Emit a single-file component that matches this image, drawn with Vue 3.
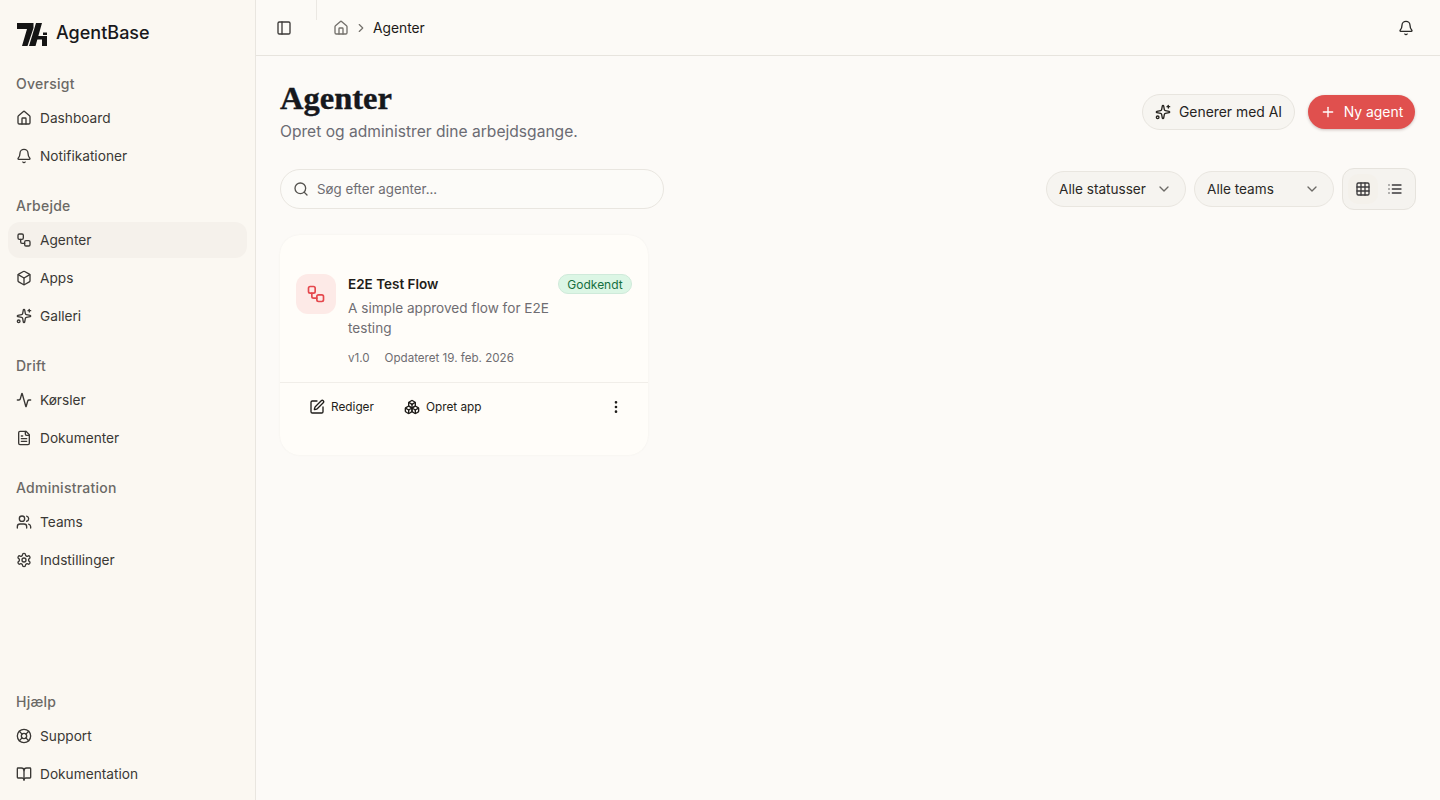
<template>
  <div class="layout">
    <aside class="sidebar">
      <div class="brand">
        <svg class="logo" viewBox="0 0 30 23" width="30" height="23">
          <path d="M0 0H16.5V5L10.5 23H5L10 6H0Z" fill="#141414" />
          <path d="M19 0H25L18.5 23H12Z" fill="#141414" />
          <path d="M16 13H30V23H25V16.5H16Z" fill="#141414" />
          <path d="M26 9.5H30V12H26Z" fill="#141414" />
        </svg>
        <span class="brand-name">AgentBase</span>
      </div>

      <nav class="nav">
        <div v-for="group in navGroups" :key="group.label" class="nav-group">
          <div class="nav-label">{{ group.label }}</div>
          <a
            v-for="item in group.items"
            :key="item.label"
            class="nav-item"
            :class="{ active: item.active }"
          >
            <svg class="icon" viewBox="0 0 24 24" v-html="icons[item.icon]"></svg>
            <span>{{ item.label }}</span>
          </a>
        </div>
      </nav>

      <div class="nav-group nav-bottom">
        <div class="nav-label">Hjælp</div>
        <a v-for="item in helpItems" :key="item.label" class="nav-item">
          <svg class="icon" viewBox="0 0 24 24" v-html="icons[item.icon]"></svg>
          <span>{{ item.label }}</span>
        </a>
      </div>
    </aside>

    <main class="main">
      <header class="topbar">
        <svg class="icon panel-icon" viewBox="0 0 24 24" v-html="icons.panel"></svg>
        <div class="topbar-sep"></div>
        <div class="crumbs">
          <svg class="icon crumb-home" viewBox="0 0 24 24" v-html="icons.house"></svg>
          <svg class="icon crumb-chev" viewBox="0 0 24 24" v-html="icons.chevronRight"></svg>
          <span class="crumb-current">Agenter</span>
        </div>
        <svg class="icon bell" viewBox="0 0 24 24" v-html="icons.bell"></svg>
      </header>

      <section class="content">
        <div class="page-head">
          <div>
            <h1>Agenter</h1>
            <p class="subtitle">Opret og administrer dine arbejdsgange.</p>
          </div>
          <div class="head-actions">
            <button class="btn-outline">
              <svg class="icon" viewBox="0 0 24 24" v-html="icons.sparkles"></svg>
              Generer med AI
            </button>
            <button class="btn-primary">
              <svg class="icon" viewBox="0 0 24 24" v-html="icons.plus"></svg>
              Ny agent
            </button>
          </div>
        </div>

        <div class="filters">
          <div class="search">
            <svg class="icon" viewBox="0 0 24 24" v-html="icons.search"></svg>
            <span>Søg efter agenter...</span>
          </div>
          <div class="filter-right">
            <div class="select">
              <span>Alle statusser</span>
              <svg class="icon chev" viewBox="0 0 24 24" v-html="icons.chevronDown"></svg>
            </div>
            <div class="select">
              <span>Alle teams</span>
              <svg class="icon chev" viewBox="0 0 24 24" v-html="icons.chevronDown"></svg>
            </div>
            <div class="view-toggle">
              <span class="view-btn on">
                <svg class="icon" viewBox="0 0 24 24" v-html="icons.grid"></svg>
              </span>
              <span class="view-btn">
                <svg class="icon" viewBox="0 0 24 24" v-html="icons.list"></svg>
              </span>
            </div>
          </div>
        </div>

        <div class="cards">
          <article class="card">
            <div class="card-body">
              <div class="card-icon">
                <svg class="icon" viewBox="0 0 24 24" v-html="icons.workflow"></svg>
              </div>
              <div class="card-text">
                <div class="card-title">
                  <span>E2E Test Flow</span>
                  <span class="badge">Godkendt</span>
                </div>
                <p class="card-desc">A simple approved flow for E2E testing</p>
                <div class="card-meta">
                  <span>v1.0</span>
                  <span>Opdateret 19. feb. 2026</span>
                </div>
              </div>
            </div>
            <div class="card-foot">
              <button class="ghost">
                <svg class="icon" viewBox="0 0 24 24" v-html="icons.pen"></svg>
                Rediger
              </button>
              <button class="ghost">
                <svg class="icon" viewBox="0 0 24 24" v-html="icons.boxes"></svg>
                Opret app
              </button>
              <button class="kebab">
                <svg class="icon" viewBox="0 0 24 24" v-html="icons.dots"></svg>
              </button>
            </div>
          </article>
        </div>
      </section>
    </main>
  </div>
</template>

<script setup>
const icons = {
  house: '<path d="M15 21v-8a1 1 0 0 0-1-1h-4a1 1 0 0 0-1 1v8"/><path d="M3 10a2 2 0 0 1 .709-1.528l7-5.999a2 2 0 0 1 2.582 0l7 5.999A2 2 0 0 1 21 10v9a2 2 0 0 1-2 2H5a2 2 0 0 1-2-2z"/>',
  bell: '<path d="M10.268 21a2 2 0 0 0 3.464 0"/><path d="M3.262 15.326A1 1 0 0 0 4 17h16a1 1 0 0 0 .74-1.673C19.41 13.956 18 12.499 18 8A6 6 0 0 0 6 8c0 4.499-1.411 5.956-2.738 7.326"/>',
  workflow: '<rect x="3" y="3" width="8" height="8" rx="2"/><path d="M7 11v4a2 2 0 0 0 2 2h4"/><rect x="13" y="13" width="8" height="8" rx="2"/>',
  box: '<path d="M21 8a2 2 0 0 0-1-1.73l-7-4a2 2 0 0 0-2 0l-7 4A2 2 0 0 0 3 8v8a2 2 0 0 0 1 1.73l7 4a2 2 0 0 0 2 0l7-4A2 2 0 0 0 21 16Z"/><path d="m3.3 7 8.7 5 8.7-5"/><path d="M12 22V12"/>',
  sparkles: '<path d="M11.017 2.814a1 1 0 0 1 1.966 0l1.051 5.558a2 2 0 0 0 1.594 1.594l5.558 1.051a1 1 0 0 1 0 1.966l-5.558 1.051a2 2 0 0 0-1.594 1.594l-1.051 5.558a1 1 0 0 1-1.966 0l-1.051-5.558a2 2 0 0 0-1.594-1.594l-5.558-1.051a1 1 0 0 1 0-1.966l5.558-1.051a2 2 0 0 0 1.594-1.594z"/><path d="M20 2v4"/><path d="M22 4h-4"/><circle cx="4" cy="20" r="2"/>',
  activity: '<path d="M22 12h-2.48a2 2 0 0 0-1.93 1.46l-2.35 8.36a.25.25 0 0 1-.48 0L9.24 2.18a.25.25 0 0 0-.48 0l-2.35 8.36A2 2 0 0 1 4.49 12H2"/>',
  file: '<path d="M15 2H6a2 2 0 0 0-2 2v16a2 2 0 0 0 2 2h12a2 2 0 0 0 2-2V7Z"/><path d="M14 2v4a2 2 0 0 0 2 2h4"/><path d="M10 9H8"/><path d="M16 13H8"/><path d="M16 17H8"/>',
  users: '<path d="M16 21v-2a4 4 0 0 0-4-4H6a4 4 0 0 0-4 4v2"/><circle cx="9" cy="7" r="4"/><path d="M22 21v-2a4 4 0 0 0-3-3.87"/><path d="M16 3.13a4 4 0 0 1 0 7.75"/>',
  settings: '<path d="M12.22 2h-.44a2 2 0 0 0-2 2v.18a2 2 0 0 1-1 1.73l-.43.25a2 2 0 0 1-2 0l-.15-.08a2 2 0 0 0-2.73.73l-.22.38a2 2 0 0 0 .73 2.73l.15.1a2 2 0 0 1 1 1.72v.51a2 2 0 0 1-1 1.74l-.15.09a2 2 0 0 0-.73 2.73l.22.38a2 2 0 0 0 2.73.73l.15-.08a2 2 0 0 1 2 0l.43.25a2 2 0 0 1 1 1.73V20a2 2 0 0 0 2 2h.44a2 2 0 0 0 2-2v-.18a2 2 0 0 1 1-1.73l.43-.25a2 2 0 0 1 2 0l.15.08a2 2 0 0 0 2.73-.73l.22-.39a2 2 0 0 0-.73-2.73l-.15-.08a2 2 0 0 1-1-1.74v-.5a2 2 0 0 1 1-1.74l.15-.09a2 2 0 0 0 .73-2.73l-.22-.38a2 2 0 0 0-2.73-.73l-.15.08a2 2 0 0 1-2 0l-.43-.25a2 2 0 0 1-1-1.73V4a2 2 0 0 0-2-2z"/><circle cx="12" cy="12" r="3"/>',
  lifebuoy: '<circle cx="12" cy="12" r="10"/><path d="m4.93 4.93 4.24 4.24"/><path d="m14.83 9.17 4.24-4.24"/><path d="m14.83 14.83 4.24 4.24"/><path d="m9.17 14.83-4.24 4.24"/><circle cx="12" cy="12" r="4"/>',
  book: '<path d="M12 7v14"/><path d="M3 18a1 1 0 0 1-1-1V4a1 1 0 0 1 1-1h5a4 4 0 0 1 4 4 4 4 0 0 1 4-4h5a1 1 0 0 1 1 1v13a1 1 0 0 1-1 1h-6a3 3 0 0 0-3 3 3 3 0 0 0-3-3z"/>',
  panel: '<rect x="3" y="3" width="18" height="18" rx="2"/><path d="M9 3v18"/>',
  chevronRight: '<path d="m9 18 6-6-6-6"/>',
  chevronDown: '<path d="m6 9 6 6 6-6"/>',
  search: '<path d="m21 21-4.34-4.34"/><circle cx="11" cy="11" r="8"/>',
  plus: '<path d="M5 12h14"/><path d="M12 5v14"/>',
  grid: '<rect x="3" y="3" width="18" height="18" rx="2"/><path d="M3 9h18"/><path d="M3 15h18"/><path d="M9 3v18"/><path d="M15 3v18"/>',
  list: '<path d="M3 12h.01"/><path d="M3 18h.01"/><path d="M3 6h.01"/><path d="M8 12h13"/><path d="M8 18h13"/><path d="M8 6h13"/>',
  pen: '<path d="M12 3H5a2 2 0 0 0-2 2v14a2 2 0 0 0 2 2h14a2 2 0 0 0 2-2v-7"/><path d="M18.375 2.625a1 1 0 0 1 3 3l-9.013 9.014a2 2 0 0 1-.853.505l-2.873.84a.5.5 0 0 1-.62-.62l.84-2.873a2 2 0 0 1 .506-.852z"/>',
  boxes: '<path d="M2.97 12.92A2 2 0 0 0 2 14.63v3.24a2 2 0 0 0 .97 1.71l3 1.8a2 2 0 0 0 2.06 0L12 19v-5.5l-5-3-4.03 2.42Z"/><path d="m7 16.5-4.74-2.85"/><path d="m7 16.5 5-3"/><path d="M7 16.5v5.17"/><path d="M12 13.5V19l3.97 2.38a2 2 0 0 0 2.06 0l3-1.8a2 2 0 0 0 .97-1.71v-3.24a2 2 0 0 0-.97-1.71L17 10.5l-5 3Z"/><path d="m17 16.5-5-3"/><path d="m17 16.5 4.74-2.85"/><path d="M17 16.5v5.17"/><path d="M7.97 4.42A2 2 0 0 0 7 6.13v4.37l5 3 5-3V6.13a2 2 0 0 0-.97-1.71l-3-1.8a2 2 0 0 0-2.06 0l-3 1.8Z"/><path d="M12 8 7.26 5.15"/><path d="m12 8 4.74-2.85"/><path d="M12 13.5V8"/>',
  dots: '<circle cx="12" cy="12" r="1"/><circle cx="12" cy="5" r="1"/><circle cx="12" cy="19" r="1"/>'
}

const navGroups = [
  {
    label: 'Oversigt',
    items: [
      { label: 'Dashboard', icon: 'house' },
      { label: 'Notifikationer', icon: 'bell' }
    ]
  },
  {
    label: 'Arbejde',
    items: [
      { label: 'Agenter', icon: 'workflow', active: true },
      { label: 'Apps', icon: 'box' },
      { label: 'Galleri', icon: 'sparkles' }
    ]
  },
  {
    label: 'Drift',
    items: [
      { label: 'Kørsler', icon: 'activity' },
      { label: 'Dokumenter', icon: 'file' }
    ]
  },
  {
    label: 'Administration',
    items: [
      { label: 'Teams', icon: 'users' },
      { label: 'Indstillinger', icon: 'settings' }
    ]
  }
]

const helpItems = [
  { label: 'Support', icon: 'lifebuoy' },
  { label: 'Dokumentation', icon: 'book' }
]
</script>

<style>
html,
body {
  margin: 0;
  background: #fcfaf7;
}
</style>

<style scoped>
.layout {
  display: flex;
  height: 800px;
  overflow: hidden;
  font-family: "Inter", "Noto Sans", sans-serif;
  color: #1c1917;
  background: #fcfaf7;
}

.icon {
  width: 16px;
  height: 16px;
  flex: none;
  fill: none;
  stroke: currentColor;
  stroke-width: 2;
  stroke-linecap: round;
  stroke-linejoin: round;
}

.sidebar {
  width: 255px;
  flex: none;
  display: flex;
  flex-direction: column;
  background: #fbf8f2;
  border-right: 1px solid #e9e6e0;
}

.brand {
  height: 64px;
  margin-bottom: 4px;
  display: flex;
  align-items: center;
  gap: 9px;
  padding: 0 17px;
}

.logo {
  flex: none;
  margin-top: 4px;
}

.brand-name {
  font-size: 18px;
  font-weight: 500;
  color: #18181b;
}

.nav {
  display: flex;
  flex-direction: column;
  gap: 16px;
}

.nav-group {
  display: flex;
  flex-direction: column;
  gap: 2px;
  padding: 0 8px;
}

.nav-bottom {
  margin-top: auto;
  padding-bottom: 8px;
}

.nav-label {
  height: 32px;
  box-sizing: border-box;
  margin-bottom: -2px;
  padding: 0 8px 2px;
  display: flex;
  align-items: center;
  font-size: 14px;
  letter-spacing: 0.25px;
  font-weight: 500;
  color: #6b6966;
}

.nav-item {
  height: 36px;
  display: flex;
  align-items: center;
  gap: 8px;
  padding: 0 8px;
  border-radius: 12px;
  font-size: 13.7px;
  color: #3a3835;
}

.nav-item.active {
  background: #f5f1eb;
}

.main {
  flex: 1;
  min-width: 0;
  display: flex;
  flex-direction: column;
}

.topbar {
  height: 55px;
  flex: none;
  display: flex;
  align-items: center;
  padding: 0 26px 0 20px;
  border-bottom: 1px solid #e7e4de;
  background: #fcfaf6;
}

.panel-icon {
  color: #3c3a38;
}

.topbar-sep {
  width: 1px;
  height: 20px;
  align-self: flex-start;
  margin-left: 24px;
  background: #ebe8e3;
}

.crumbs {
  display: flex;
  align-items: center;
  margin-left: 16px;
}

.crumb-home {
  color: #74716c;
}

.crumb-chev {
  width: 14px;
  height: 14px;
  margin: 0 5px;
  color: #74716c;
}

.crumb-current {
  font-size: 13.8px;
  color: #1c1917;
}

.bell {
  margin-left: auto;
  color: #2b2a28;
}

.content {
  flex: 1;
  padding: 24px 24px 0;
}

.page-head {
  display: flex;
  align-items: center;
  justify-content: space-between;
}

h1 {
  margin: 0;
  font-family: "Liberation Serif", serif;
  font-size: 32.5px;
  line-height: 36px;
  font-weight: 700;
  color: #16181d;
  -webkit-text-stroke: 0.4px #16181d;
}

.subtitle {
  margin: 4px 0 0;
  height: 23px;
  font-size: 15.6px;
  line-height: 24px;
  color: #6b6b73;
}

.head-actions {
  display: flex;
  align-items: center;
  gap: 13px;
  margin-right: 1px;
}

.btn-outline,
.btn-primary {
  display: flex;
  align-items: center;
  gap: 8px;
  border-radius: 999px;
  font-family: inherit;
  font-size: 13.9px;
  box-sizing: border-box;
}

.btn-outline {
  width: 153px;
  height: 36px;
  justify-content: center;
  padding: 0;
  background: #f7f5f1;
  border: 1px solid #e8e5df;
  color: #26241f;
}

.btn-primary {
  width: 107px;
  height: 34px;
  justify-content: center;
  padding: 0;
  background: #e0504e;
  border: 0;
  color: #fff;
  box-shadow: 0 1px 3px rgba(60, 20, 20, 0.25);
}

.filters {
  margin-top: 25px;
  display: flex;
  align-items: center;
  justify-content: space-between;
}

.search {
  width: 384px;
  height: 40px;
  box-sizing: border-box;
  display: flex;
  align-items: center;
  gap: 8px;
  padding: 0 12px;
  border: 1px solid #e9e6e0;
  border-radius: 999px;
  background: #fcfbf8;
  font-size: 13.3px;
  color: #6f6d72;
}

.search .icon {
  color: #55534f;
}

.filter-right {
  display: flex;
  align-items: center;
  gap: 8px;
}

.select {
  width: 140px;
  height: 36px;
  box-sizing: border-box;
  display: flex;
  align-items: center;
  justify-content: space-between;
  padding: 0 13px 0 12px;
  border: 1px solid #e9e6e0;
  border-radius: 999px;
  background: #f6f4f0;
  font-size: 13.6px;
  color: #2a2825;
}

.chev {
  color: #6c6a66;
}

.view-toggle {
  width: 74px;
  height: 42px;
  box-sizing: border-box;
  display: flex;
  align-items: center;
  justify-content: center;
  gap: 2px;
  border: 1px solid #e6e3dd;
  border-radius: 12px;
  background: #f5f3ef;
  color: #3b3a3c;
}

.view-btn {
  width: 30px;
  height: 30px;
  display: flex;
  align-items: center;
  justify-content: center;
  border-radius: 10px;
}

.view-btn.on {
  background: #f4f1eb;
}

.cards {
  margin-top: 25px;
  display: grid;
  grid-template-columns: repeat(3, 1fr);
  gap: 16px;
}

.card {
  height: 220px;
  box-sizing: border-box;
  display: flex;
  flex-direction: column;
  border-radius: 20px;
  background: #fffdf9;
  box-shadow: 0 0 2px rgba(120, 110, 90, 0.08);
}

.card-body {
  display: flex;
  gap: 12px;
  height: 147px;
  box-sizing: border-box;
  padding: 39px 16px 0;
}

.card-icon {
  width: 40px;
  height: 40px;
  flex: none;
  display: flex;
  align-items: center;
  justify-content: center;
  border-radius: 12px;
  background: #fdeae7;
  color: #e5484d;
}

.card-icon .icon {
  width: 20px;
  height: 20px;
}

.card-text {
  flex: 1;
  min-width: 0;
}

.card-title {
  display: flex;
  align-items: center;
  justify-content: space-between;
  height: 20px;
  font-size: 13.5px;
  font-weight: 600;
  color: #1f1d1a;
}

.badge {
  width: 74px;
  height: 20px;
  box-sizing: border-box;
  display: flex;
  align-items: center;
  justify-content: center;
  border: 1px solid #cfeada;
  border-radius: 999px;
  background: #dcf6e5;
  font-size: 12px;
  font-weight: 400;
  color: #15703f;
}

.card-desc {
  margin: 4px 0 0;
  width: 215px;
  font-size: 13.6px;
  line-height: 20px;
  color: #6f6d72;
}

.card-meta {
  margin-top: 12px;
  display: flex;
  gap: 15px;
  font-size: 11.6px;
  line-height: 16px;
  color: #6f6d72;
}

.card-foot {
  height: 48px;
  display: flex;
  align-items: center;
  padding: 0 16px;
  border-top: 1px solid #f1eee9;
}

.ghost {
  display: flex;
  align-items: center;
  gap: 6px;
  padding: 0 13px;
  margin-right: 4px;
  height: 32px;
  border: 0;
  background: none;
  font-family: inherit;
  font-size: 11.8px;
  color: #1f1d1a;
}

.kebab {
  margin-left: auto;
  width: 32px;
  height: 32px;
  display: flex;
  align-items: center;
  justify-content: center;
  padding: 0;
  border: 0;
  background: none;
  color: #1f1d1a;
}
</style>
